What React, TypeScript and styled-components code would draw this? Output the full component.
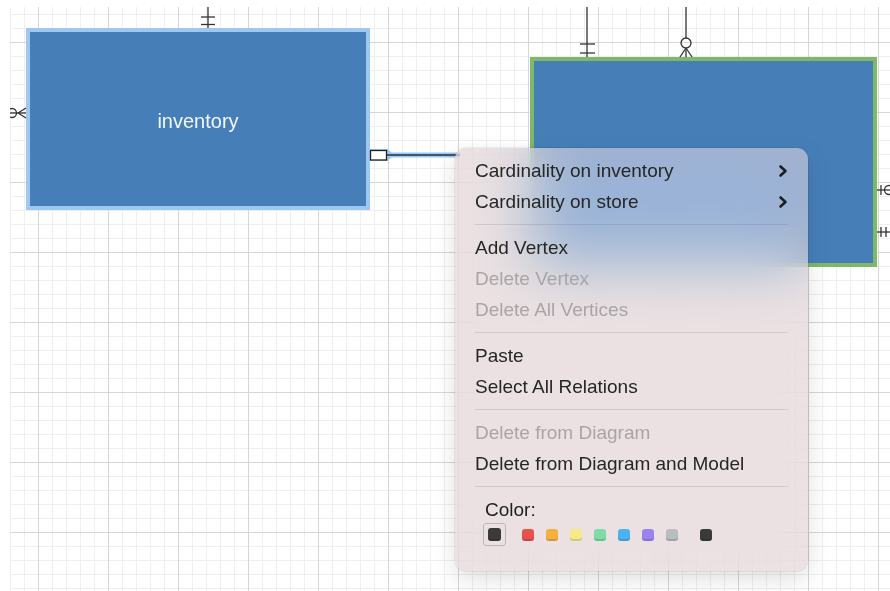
import React from "react";
import styled, { createGlobalStyle } from "styled-components";

// Global
const GlobalStyle = createGlobalStyle`
  html, body {
    margin: 0;
    padding: 0;
    width: 890px;
    height: 591px;
    overflow: hidden;
    background: #ffffff;
    font-family: "Liberation Sans", Arial, sans-serif;
  }
`;

// Canvas
const Page = styled.div`
  position: relative;
  width: 890px;
  height: 591px;
  overflow: hidden;
  background: #ffffff;
`;

const Canvas = styled.div`
  position: relative;
  margin: 7px 0 0 10px;
  width: 880px;
  height: 584px;
  overflow: hidden;
  background-color: #ffffff;
  background-image:
    linear-gradient(to right, #d6d6d6 1px, transparent 1px),
    linear-gradient(to bottom, #d6d6d6 1px, transparent 1px),
    linear-gradient(to right, #efefef 1px, transparent 1px),
    linear-gradient(to bottom, #efefef 1px, transparent 1px);
  background-size: 70px 70px, 70px 70px, 14px 14px, 14px 14px;
  background-position: 28px 35px, 28px 35px, 28px 35px, 28px 35px;
`;

const Entity = styled.div<{ $outline: string }>`
  position: absolute;
  box-sizing: border-box;
  display: flex;
  align-items: center;
  justify-content: center;
  background: #467fb8;
  border: 4px solid ${(p) => p.$outline};
  color: #f3f7fb;
  font-size: 20px;
  padding-top: 4px;
`;

const Links = styled.svg`
  position: absolute;
  left: 0;
  top: 0;
  width: 880px;
  height: 584px;
  overflow: hidden;
  pointer-events: none;
`;

// Menu
const Menu = styled.div`
  position: absolute;
  left: 455px;
  top: 148px;
  width: 353px;
  box-sizing: border-box;
  padding: 7px 0 25px;
  border-radius: 11px;
  background: rgba(224, 209, 212, 0.62);
  backdrop-filter: blur(30px) saturate(160%);
  -webkit-backdrop-filter: blur(30px) saturate(160%);
  box-shadow: 0 0 0 0.5px rgba(0, 0, 0, 0.12), 0 8px 24px rgba(0, 0, 0, 0.13);
  font-size: 19px;
`;

const Item = styled.div<{ $disabled?: boolean }>`
  display: flex;
  align-items: center;
  justify-content: space-between;
  height: 31px;
  padding: 0 20px 0 20px;
  color: ${(p) => (p.$disabled ? "#aaa4a5" : "#262626")};
  white-space: nowrap;
`;

const Separator = styled.div`
  height: 1px;
  margin: 7px 20px;
  background: rgba(60, 40, 45, 0.13);
`;

const ColorBlock = styled.div`
  padding: 4px 0 0 28px;
`;

const ColorLabel = styled.div`
  color: #1f1f1f;
  padding-left: 2px;
  height: 24px;
  line-height: 24px;
`;

const Swatches = styled.div`
  display: flex;
  align-items: center;
  gap: 12px;
  margin-top: 1px;
`;

const SelectedCell = styled.div`
  box-sizing: border-box;
  width: 23px;
  height: 23px;
  display: flex;
  align-items: center;
  justify-content: center;
  border: 1.5px solid #bdb6b7;
  border-radius: 3px;
  margin-right: 4px;
`;

const Swatch = styled.span<{ $color: string; $gap?: number }>`
  display: block;
  width: 12px;
  height: 12px;
  border-radius: 3px;
  background: ${(p) => p.$color};
  box-shadow: inset 0 -2px 0 rgba(0, 0, 0, 0.14);
  margin-left: ${(p) => p.$gap ?? 0}px;
`;

const Chevron = () => (
  <svg width="10" height="14" viewBox="0 0 10 14">
    <path d="M2.5 2.5 L7.5 7 L2.5 11.5" fill="none" stroke="#1e1e1e" strokeWidth="2.6" strokeLinecap="round" strokeLinejoin="round" />
  </svg>
);

const colors = ["#e5534b", "#f4b13e", "#f6e98b", "#7fdba6", "#4db3ee", "#9b83ef", "#b9bdc1"];

const App = () => {
  return (
    <Page>
      <GlobalStyle />
      <Canvas>
        <Entity $outline="#9cc8f1" style={{ left: 16, top: 21, width: 344, height: 182 }}>
          inventory
        </Entity>
        <Entity $outline="#80b86b" style={{ left: 520, top: 50, width: 347, height: 210 }} />

        <Links viewBox="10 7 880 584">
          <g stroke="#333" strokeWidth="1.3" fill="none">
            {/* inventory top */}
            <line x1="208" y1="7" x2="208" y2="28" />
            <line x1="201" y1="17" x2="215" y2="17" />
            <line x1="201" y1="24.5" x2="215" y2="24.5" />

            {/* inventory left */}
            <line x1="10" y1="113" x2="26" y2="113" />
            <circle cx="12" cy="113" r="4.5" />
            <line x1="18" y1="113" x2="26" y2="108" />
            <line x1="18" y1="113" x2="26" y2="118" />

            {/* store top */}
            <line x1="587" y1="7" x2="587" y2="57" />
            <line x1="580" y1="44" x2="595" y2="44" />
            <line x1="580" y1="53" x2="595" y2="53" />

            <line x1="686" y1="7" x2="686" y2="38" />
            <circle cx="686" cy="43" r="5" />
            <line x1="686" y1="48" x2="686" y2="57" />
            <line x1="686" y1="48" x2="680" y2="57" />
            <line x1="686" y1="48" x2="692" y2="57" />

            {/* store right */}
            <line x1="877" y1="190" x2="891" y2="190" />
            <line x1="881" y1="185" x2="881" y2="195" />
            <circle cx="889" cy="190" r="4.5" />
            <line x1="877" y1="232" x2="891" y2="232" />
            <line x1="881" y1="227" x2="881" y2="237" />
            <line x1="886" y1="227" x2="886" y2="237" />
          </g>

          {/* selected relation */}
          <line x1="370" y1="155" x2="460" y2="155" stroke="#9cc8f1" strokeWidth="5" />
          <rect x="369" y="149" width="19" height="12" fill="#9cc8f1" />
          <circle cx="387" cy="155" r="5" fill="#9cc8f1" />
          <line x1="387" y1="155" x2="460" y2="155" stroke="#26323d" strokeWidth="1.5" />
          <rect x="370.5" y="150.5" width="16" height="9.5" fill="#ffffff" stroke="#222" strokeWidth="1.3" />
        </Links>
      </Canvas>

      <Menu>
        <Item>
          Cardinality on inventory
          <Chevron />
        </Item>
        <Item>
          Cardinality on store
          <Chevron />
        </Item>
        <Separator />
        <Item>Add Vertex</Item>
        <Item $disabled>Delete Vertex</Item>
        <Item $disabled>Delete All Vertices</Item>
        <Separator />
        <Item>Paste</Item>
        <Item>Select All Relations</Item>
        <Separator />
        <Item $disabled>Delete from Diagram</Item>
        <Item>Delete from Diagram and Model</Item>
        <Separator />
        <ColorBlock>
          <ColorLabel>Color:</ColorLabel>
          <Swatches>
            <SelectedCell>
              <Swatch $color="#3a3a3a" style={{ width: 13, height: 13 }} />
            </SelectedCell>
            {colors.map((c) => (
              <Swatch key={c} $color={c} />
            ))}
            <Swatch $color="#3a3a3a" $gap={10} />
          </Swatches>
        </ColorBlock>
      </Menu>
    </Page>
  );
};

export default App;
